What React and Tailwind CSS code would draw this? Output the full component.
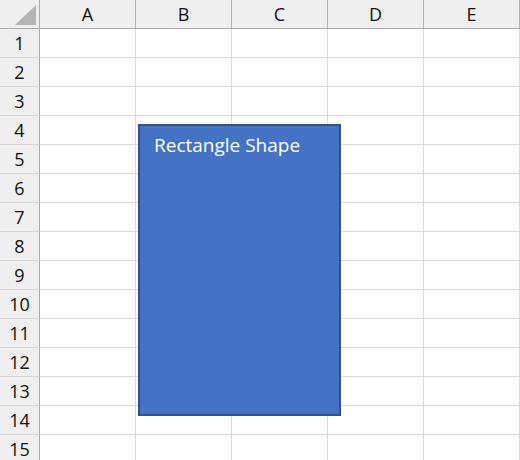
import React from "react";

const cols = ["A", "B", "C", "D", "E"];
const rows = Array.from({ length: 15 }, (_, i) => i + 1);

export default function App() {
  return (
    <div
      className="relative w-[520px] h-[460px] overflow-hidden bg-white"
      style={{ fontFamily: '"Open Sans", "Liberation Sans", sans-serif' }}
    >
      <div className="grid grid-cols-[40px_repeat(5,96px)] auto-rows-[29px]">
        {/* corner */}
        <div className="relative bg-[#efefef] border-r border-b border-[#ababab]">
          <svg className="absolute left-0 top-0" width="40" height="29" viewBox="0 0 40 29">
            <polygon points="36,5 36,25 15,25" fill="#b4b4b4" />
          </svg>
        </div>
        {cols.map((c) => (
          <div
            key={c}
            className="flex items-center justify-center bg-[#efefef] border-r border-r-[#b0b0b0] border-b border-b-[#ababab] text-[18px] text-[#111]"
          >
            {c}
          </div>
        ))}
        {rows.map((r) => (
          <React.Fragment key={r}>
            <div className="flex items-center justify-center bg-[#efefef] border-r border-r-[#ababab] border-b border-b-[#d4d4d4] text-[18px] text-[#111]">
              {r}
            </div>
            {cols.map((c) => (
              <div key={c} className="border-r border-b border-[#dadada]" />
            ))}
          </React.Fragment>
        ))}
      </div>
      <div className="absolute left-[138px] top-[124px] w-[203px] h-[292px] bg-[#4472c4] border-2 border-[#2f528f] pl-[14px] pt-[6px]">
        <div className="text-white text-[19px] leading-[26px]">Rectangle Shape</div>
      </div>
    </div>
  );
}
